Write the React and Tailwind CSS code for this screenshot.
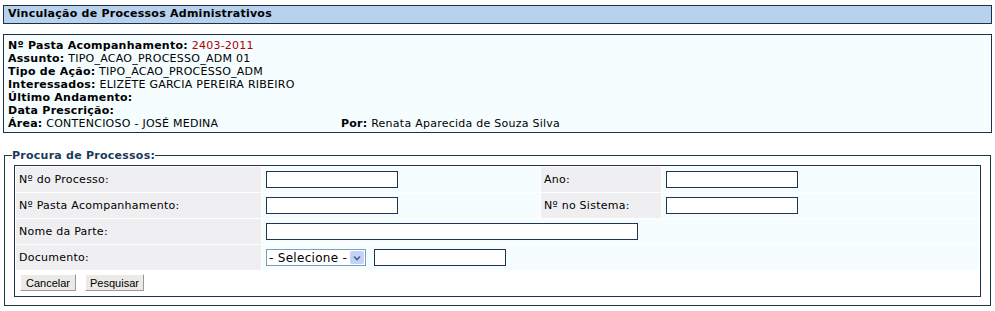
import React from 'react'

const font = { fontFamily: '"DejaVu Sans", Verdana, sans-serif' }

const Field = ({ className = '' }) => (
  <input type="text" className={`h-[17px] border border-[#1f3450] bg-white ${className}`} />
)

const Label = ({ children, className = '' }) => (
  <div className={`flex items-center bg-[#efeff1] pl-[3px] pt-[2px] text-[11px] text-black ${className}`}>{children}</div>
)

export default function App() {
  return (
    <div className="min-h-screen bg-white pt-[5px] tracking-[0.25px]" style={font}>
      <div className="mx-[3px] w-[989px] border border-[#1c3048] bg-[#b8d1ec] px-[4px] h-[19px] flex items-center">
        <h1 className="text-[11px] font-bold text-black">Vinculação de Processos Administrativos</h1>
      </div>

      <div className="mx-[3px] mt-[10px] w-[989px] h-[99px] border border-[#1c3048] bg-[#f5fdff] px-[4px] pt-[4px] text-[11px] leading-[13px] text-black">
        <p><b>Nº Pasta Acompanhamento:</b> <span className="text-[#b00000]">2403-2011</span></p>
        <p><b>Assunto:</b> TIPO_ACAO_PROCESSO_ADM 01</p>
        <p><b>Tipo de Ação:</b> TIPO_ACAO_PROCESSO_ADM</p>
        <p><b>Interessados:</b> ELIZETE GARCIA PEREIRA RIBEIRO</p>
        <p><b>Último Andamento:</b></p>
        <p><b>Data Prescrição:</b></p>
        <div className="flex">
          <p className="w-[333px]"><b>Área:</b> CONTENCIOSO - JOSÉ MEDINA</p>
          <p><b>Por:</b> Renata Aparecida de Souza Silva</p>
        </div>
      </div>

      <fieldset className="mx-[4px] mt-[16px] w-[987px] border border-[#1a3d3d] px-[7px] pb-[8px]">
        <legend className="px-0 text-[11px] font-bold leading-[13px] text-[#1b3a5c]">Procura de Processos:</legend>
        <div className="ml-[2px] mt-[3px] w-[967px] h-[132px] border border-[#1f3350] bg-white p-[1px]">
          <div className="grid grid-cols-[245px_278px_120px_317px] auto-rows-[25px] gap-[1px]">
            <Label>Nº do Processo:</Label>
            <div className="flex items-center bg-[#f5fdff] pl-[4px]"><Field className="w-[132px]" /></div>
            <Label>Ano:</Label>
            <div className="flex items-center bg-[#f5fdff] pl-[4px]"><Field className="w-[132px]" /></div>

            <Label>Nº Pasta Acompanhamento:</Label>
            <div className="flex items-center bg-[#f5fdff] pl-[4px]"><Field className="w-[132px]" /></div>
            <Label>Nº no Sistema:</Label>
            <div className="flex items-center bg-[#f5fdff] pl-[4px]"><Field className="w-[132px]" /></div>

            <Label>Nome da Parte:</Label>
            <div className="col-span-3 flex items-center bg-[#f5fdff] pl-[4px]"><Field className="w-[372px]" /></div>

            <Label>Documento:</Label>
            <div className="col-span-3 flex items-center gap-[8px] bg-[#f5fdff] pl-[4px]">
              <div className="flex h-[17px] w-[100px] items-center justify-between border border-[#7f9db9] bg-white pl-[2px] pr-[1px] text-[12px] leading-[15px] tracking-[0.3px] whitespace-nowrap text-black">
                <span className="pt-[1px]">- Selecione -</span>
                <span className="flex h-[13px] w-[14px] shrink-0 items-center justify-center rounded-[2px] bg-[#c1d3fb]">
                  <svg width="8" height="6" viewBox="0 0 8 6"><path d="M1 1.5 L4 4.5 L7 1.5" fill="none" stroke="#4d6185" strokeWidth="1.6" /></svg>
                </span>
              </div>
              <Field className="w-[132px]" />
            </div>
          </div>
          <div className="mt-[4px] flex gap-[9px] pl-[4px]">
            <button className="h-[17px] w-[56px] border border-t-white border-l-white border-b-[#9a9a9a] border-r-[#9a9a9a] bg-[#ebeae6] text-[11px] leading-[14px] tracking-normal text-black" style={{ fontFamily: '"Liberation Sans", Tahoma, sans-serif' }}>Cancelar</button>
            <button className="h-[17px] w-[59px] border border-t-white border-l-white border-b-[#9a9a9a] border-r-[#9a9a9a] bg-[#ebeae6] text-[11px] leading-[14px] tracking-normal text-black" style={{ fontFamily: '"Liberation Sans", Tahoma, sans-serif' }}>Pesquisar</button>
          </div>
        </div>
      </fieldset>
    </div>
  )
}
